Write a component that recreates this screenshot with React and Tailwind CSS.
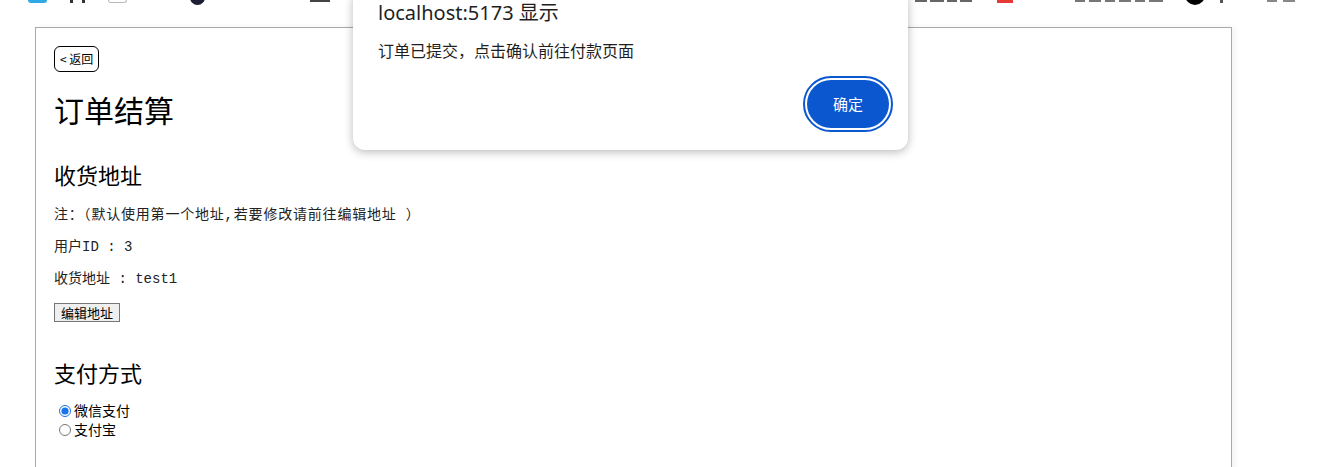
import React from "react";

const cjk = { fontFamily: '"Microsoft YaHei","Noto Sans CJK SC",sans-serif' };

export default function App() {
  return (
    <div className="relative h-[467px] w-[1319px] overflow-hidden bg-white font-['Noto_Sans','Noto_Sans_CJK_SC',sans-serif] text-black">
      {/* clipped bookmark bar fragments */}
      <div className="flex h-[27px] items-start">
        <div className="ml-[28px] h-[3px] w-[19px] rounded-b-[3px] bg-[#2fa9e6]" />
        <div className="ml-[23px] flex h-[3px] w-[15px] justify-between">
          <div className="h-[3px] w-[3px] bg-[#333]" />
          <div className="h-[3px] w-[3px] bg-[#333]" />
        </div>
        <div className="ml-[23px] h-[3px] w-[19px] rounded-b-[3px] border border-t-0 border-[#bbb]" />
        <div className="ml-[63px] h-[5px] w-[15px] overflow-hidden">
          <div className="-mt-[10px] h-[15px] w-[15px] rounded-full bg-[#1d1d35]" />
        </div>
        <div className="ml-[105px] h-[2px] w-[20px] bg-[#444]" />
        <div className="ml-[585px] flex h-[2px] w-[60px] gap-[3px]">
          <div className="h-[2px] w-[12px] bg-[#666]" />
          <div className="h-[2px] w-[14px] bg-[#666]" />
          <div className="h-[2px] w-[10px] bg-[#666]" />
          <div className="h-[2px] w-[12px] bg-[#666]" />
        </div>
        <div className="ml-[22px] h-[3px] w-[16px] bg-[#e53935]" />
        <div className="ml-[62px] flex h-[2px] w-[90px] gap-[4px]">
          <div className="h-[2px] w-[10px] bg-[#777]" />
          <div className="h-[2px] w-[12px] bg-[#777]" />
          <div className="h-[2px] w-[10px] bg-[#777]" />
          <div className="h-[2px] w-[12px] bg-[#777]" />
          <div className="h-[2px] w-[10px] bg-[#777]" />
          <div className="h-[2px] w-[14px] bg-[#777]" />
        </div>
        <div className="ml-[20px] h-[5px] w-[20px] overflow-hidden">
          <div className="-mt-[15px] h-[20px] w-[20px] rounded-full bg-black" />
        </div>
        <div className="ml-[15px] h-[3px] w-[3px] bg-[#555]" />
        <div className="ml-[44px] flex h-[2px] w-[30px] gap-[6px]">
          <div className="h-[2px] w-[10px] bg-[#888]" />
          <div className="h-[2px] w-[12px] bg-[#888]" />
        </div>
      </div>

      {/* page content */}
      <div className="ml-[35px] h-[460px] w-[1197px] border border-[#a9a9a9] pl-[18px] pt-[18px] shadow-[3px_0_6px_rgba(0,0,0,0.05)]">
        <button
          className="flex h-[26px] items-center rounded-[6px] border border-black px-[5px] text-[12px] leading-none"
          style={cjk}
        >
          &lt; 返回
        </button>
        <h1 className="mt-[19px] text-[30px] leading-[36px]" style={cjk}>订单结算</h1>
        <h2 className="mt-[33px] text-[22px] leading-[28px]" style={cjk}>收货地址</h2>
        <p className="mt-[19px] text-[14px] leading-[16px] tracking-[0.8px] text-[#222] font-['Liberation_Mono','Noto_Sans_CJK_SC',monospace]">
          注：（默认使用第一个地址,若要修改请前往编辑地址 ）
        </p>
        <p className="mt-[16px] text-[14px] leading-[16px] text-[#222] font-['Liberation_Mono','Noto_Sans_CJK_SC',monospace]">
          用户ID : 3
        </p>
        <p className="mt-[16px] text-[14px] leading-[16px] text-[#222] font-['Liberation_Mono','Noto_Sans_CJK_SC',monospace]">
          收货地址 : test1
        </p>
        <button
          className="mt-[16px] flex h-[19px] items-center border border-[#767676] bg-[#efefef] px-[6px] text-[13px] leading-none"
          style={cjk}
        >
          编辑地址
        </button>
        <h2 className="mt-[36px] text-[22px] leading-[28px]" style={cjk}>支付方式</h2>
        <div className="mt-[15px] flex flex-col text-[14px] leading-[19px]" style={cjk}>
          <label className="flex items-center">
            <input type="radio" name="pay" defaultChecked className="ml-[5px] mr-[3px] h-[12px] w-[12px] accent-[#1a73e8]" />
            微信支付
          </label>
          <label className="flex items-center">
            <input type="radio" name="pay" className="ml-[5px] mr-[3px] h-[12px] w-[12px]" />
            支付宝
          </label>
        </div>
      </div>

      {/* alert dialog */}
      <div className="absolute left-[353px] top-[-10px] flex h-[160px] w-[555px] flex-col rounded-[12px] bg-white pl-[25px] pr-[19px] pt-[11px] shadow-[0_2px_10px_rgba(0,0,0,0.28)]">
        <div className="text-[20px] leading-[24px] text-[#1f1f1f] font-['Noto_Sans','Noto_Sans_CJK_SC',sans-serif]">
          localhost:5173 显示
        </div>
        <div className="mt-[15px] text-[16px] leading-[20px] text-[#1f1f1f]" style={cjk}>
          订单已提交，点击确认前往付款页面
        </div>
        <div className="mt-[20px] flex justify-end">
          <button
            className="flex h-[48px] w-[82px] items-center justify-center rounded-full bg-[#0b57d0] text-[15px] text-white outline-2 outline-offset-2 outline-[#0b57d0]"
            style={cjk}
          >
            确定
          </button>
        </div>
      </div>
    </div>
  );
}
